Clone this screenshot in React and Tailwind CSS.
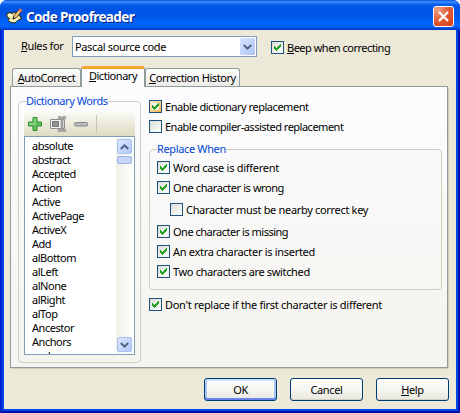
import React from 'react';

const words = ['absolute', 'abstract', 'Accepted', 'Action', 'Active', 'ActivePage', 'ActiveX', 'Add', 'alBottom', 'alLeft', 'alNone', 'alRight', 'alTop', 'Ancestor', 'Anchors', 'and'];

function Key({ children }) {
  return <span className="inline-block h-[13px] border-b border-black leading-[14px]">{children}</span>;
}

function Chevron({ up, className }) {
  return (
    <svg className={className} width="9" height="6" viewBox="0 0 9 6">
      <path d={up ? 'M0.8 5 L4.5 1.4 L8.2 5' : 'M0.8 1 L4.5 4.6 L8.2 1'} fill="none" stroke="#4d6185" strokeWidth="2" />
    </svg>
  );
}

function Check({ checked, hot, className = '', tracking = '', label }) {
  return (
    <div className={`flex h-[13px] items-center ${className}`}>
      <span className={`flex h-[13px] w-[13px] shrink-0 items-center justify-center border border-[#1c5180] bg-linear-to-br ${hot ? 'from-[#fff0cf] to-[#f8b636]' : 'from-[#dcdcd7] to-white'}`}>
        <span className={`flex h-[7px] w-[7px] items-center justify-center ${hot ? 'bg-[#f4f4ef]' : ''}`}>
          {checked && (
            <svg width="7" height="7" viewBox="0 0 7 7" shapeRendering="crispEdges">
              <path d="M0 2h1v1h1v1h1v-1h1v-1h1v-1h1v-1h1v3h-1v1h-1v1h-1v1h-1v1h-1v-1h-1v-1h-1z" fill="#21a121" />
            </svg>
          )}
        </span>
      </span>
      <span className={`ml-[3px] whitespace-nowrap leading-[14px] ${tracking}`}>{label}</span>
    </div>
  );
}

function Group({ title, legend, className, children }) {
  return (
    <fieldset className={`min-w-0 rounded-[4px] border border-[#d0d0bf] ${className}`}>
      <legend className={`h-[14px] whitespace-nowrap leading-[14px] text-[#0046d5] ${legend}`}>{title}</legend>
      {children}
    </fieldset>
  );
}

function Button({ primary, children }) {
  return (
    <button className={`flex h-[23px] w-[73px] items-center justify-center rounded-[3px] border border-[#003c74] bg-linear-to-b from-white via-[#f5f5f1] to-[#e8e7df] leading-[14px] tracking-[-0.35px] ${primary ? 'shadow-[inset_0_2px_0_#cee0fb,inset_0_-2px_0_#6982ee,inset_2px_0_0_#a9c3f2,inset_-2px_0_0_#a9c3f2]' : 'shadow-[inset_0_-1px_0_#d6d0c5]'}`}>
      <span>{children}</span>
    </button>
  );
}

function ScrollButton({ up }) {
  return (
    <span className="flex h-[15px] w-[15px] shrink-0 items-center justify-center rounded-[2px] border border-[#a9bff0] bg-linear-to-br from-[#dce7ff] to-[#b2c8fa]">
      <Chevron up={up} />
    </span>
  );
}

export default function App() {
  return (
    <div className="h-[413px] w-[460px] bg-white">
      <div className="flex h-full w-full flex-col overflow-hidden rounded-t-[7px] bg-[#0831d9] font-['Noto_Sans','Open_Sans',sans-serif] text-[11px] text-black">
        <header className="flex h-[30px] shrink-0 items-center bg-[linear-gradient(180deg,#0a50d8_0,#3c91ff_2px,#0b60ec_4px,#0054e3_8px,#0055e8_16px,#0066ff_24px,#0062f8_27px,#003dd0_29px,#0038c0_30px)] pl-[6px] pr-[6px] pt-[2px]">
          <svg width="17" height="16" viewBox="0 0 17 16">
            <path d="M1 5.500L4 4.500 6 5.500 9 4 14 8 15.500 11 11.500 12 9 15 5 14.500 2 12.500 3.500 10.500 1 9Z" fill="#efe79a" stroke="#2b2810" />
            <path d="M2.500 7L6 8M4.500 12.500L9 13 12.500 10.500" fill="none" stroke="#fffde0" strokeWidth="1.500" />
            <path d="M7 11L8 7.500 12.500 2 15 4 10.500 9.500Z" fill="#efc27a" stroke="#3a2412" strokeWidth=".8" />
            <path d="M12.200 2.200L14 .3 16.500 2.300 14.800 4.400Z" fill="#d9705a" />
            <path d="M6.500 11.500L7.500 9 9 10.200Z" fill="#111" />
          </svg>
          <h1 className="ml-[3px] mt-px text-[13.5px] font-bold leading-[20px] tracking-[-0.62px] text-white [text-shadow:1px_1px_0_#0a1f80]">Code Proofreader</h1>
          <button className="ml-auto flex h-[21px] w-[21px] items-center justify-center rounded-[3px] border border-white bg-[radial-gradient(circle_at_20%_15%,#f0a088_0,#e3603c_45%,#d03a10_100%)]">
            <svg width="11" height="11" viewBox="0 0 11 11"><path d="M1 1L10 10M10 1L1 10" stroke="white" strokeWidth="2.2" /></svg>
          </button>
        </header>

        <div className="h-[383px] w-full border-x-2 border-b-2 border-b-[#0010a8] border-l-[#0020d0] border-r-[#0010a8]">
          <main className="h-full w-full border-x-2 border-b-2 border-[#0046ea] bg-[#ece9d8]">
            <div className="flex h-[36px] pt-[6px]">
              <div className="ml-[17px] w-[51px] pt-[3px] leading-[14px] tracking-[-0.38px] whitespace-nowrap"><Key>R</Key>ules for</div>
              <div className="flex h-[21px] w-[185px] items-center border border-[#7f9db9] bg-white pl-[2px] pr-[1px]">
                <span className="leading-[14px] tracking-[-0.36px]">Pascal source code</span>
                <span className="ml-auto flex h-[17px] w-[15px] items-center justify-center rounded-[1px] bg-linear-to-br from-[#dae5ff] to-[#aec5f7]"><Chevron /></span>
              </div>
              <Check checked className="ml-[14px] mt-[5px]" tracking="tracking-[-0.5px]" label={<><Key>B</Key>eep when correcting</>} />
            </div>

            <div className="flex h-[20px] items-end whitespace-nowrap pl-[8px] leading-[14px]">
              <div className="flex h-[18px] w-[69px] justify-center rounded-t-[3px] border border-b-0 border-[#919b9c] bg-linear-to-b from-white to-[#ecebe6] pt-[2px] tracking-[-0.45px]"><span><Key>A</Key>utoCorrect</span></div>
              <div className="relative z-10 -mb-px flex h-[21px] w-[64px] justify-center rounded-t-[3px] border-x border-t-[3px] border-x-[#919b9c] border-t-[#f5a631] bg-[#fcfcfe] tracking-[-0.45px]"><span><Key>D</Key>ictionary</span></div>
              <div className="flex h-[18px] w-[95px] justify-center rounded-t-[3px] border border-b-0 border-[#919b9c] bg-linear-to-b from-white to-[#ecebe6] pt-[2px] tracking-[-0.42px]"><span><Key>C</Key>orrection History</span></div>
            </div>

            <section className="ml-[6px] flex h-[282px] w-[438px] border border-[#919b9c] bg-linear-to-b from-[#fcfcfe] to-[#f4f3ee] shadow-[1px_1px_0_#d0cebf]">
              <Group title="Dictionary Words" legend="ml-[2px] tracking-[-0.44px]" className="ml-[7px] mt-[7px] h-[269px] w-[123px] pl-[5px]">
                <div className="mt-[4px] flex h-[24px] w-[111px] items-center bg-linear-to-b from-[#fafaf6] to-[#dedbc1] pl-[4px]">
                  <svg width="14" height="14" viewBox="0 0 14 14"><path d="M5 .5h4v4.500h4.500v4H9v4.500H5V9H.5V5H5z" fill="#65bd60" stroke="#25932a" /><path d="M7 1v6M1 7h6" stroke="#b5e0ae" /></svg>
                  <svg className="ml-[8px]" width="17" height="16" viewBox="0 0 17 16">
                    <path d="M.5 3.500h14v9H.5z" fill="#f2f2f2" stroke="#909090" />
                    <path d="M2.500 5.500h6v5h-6z" fill="#929292" stroke="#777" />
                    <path d="M8 1.500h2.500l1.500 1 1.500-1H16M8 14.500h2.500l1.500-1 1.500 1H16M12 2v12" fill="none" stroke="#858585" strokeWidth="2.600" />
                    <path d="M8.500 1.500h2l1.500 1 1.500-1h2M8.500 14.500h2l1.500-1 1.500 1h2M12 2.500v11" fill="none" stroke="#ccc" strokeWidth=".8" />
                  </svg>
                  <svg className="ml-[7px]" width="14" height="5" viewBox="0 0 14 5"><rect x=".5" y=".5" width="13" height="3.500" rx="1" fill="#bbb" stroke="#888" /></svg>
                  <span className="ml-[8px] h-[19px] w-px bg-[#c9c6b0]" />
                </div>
                <div className="flex h-[219px] w-[111px] border border-[#7f9db9] bg-white pl-px pr-px pt-px">
                  <ul className="h-[216px] flex-1 overflow-hidden pl-[6px] pt-px tracking-[-0.46px]">
                    {words.map((w) => <li key={w} className="h-[14px] leading-[14px]">{w}</li>)}
                  </ul>
                  <div className="flex h-[215px] w-[17px] flex-col items-center bg-linear-to-r from-[#f0f0ea] to-[#fefefb] py-px">
                    <ScrollButton up />
                    <span className="mt-[2px] h-[8px] w-[15px] rounded-[2px] border border-[#98b1e4] bg-[#c8d6fb]" />
                    <span className="mt-auto"><ScrollButton /></span>
                  </div>
                </div>
              </Group>

              <div className="ml-[8px] flex flex-col pt-[13px]">
                <Check checked hot tracking="tracking-[-0.47px]" label="Enable dictionary replacement" />
                <Check className="mt-[7px]" tracking="tracking-[-0.5px]" label="Enable compiler-assisted replacement" />
                <Group title="Replace When" legend="tracking-[-0.36px]" className="mt-[9px] h-[148px] w-[293px] pl-[7px]">
                  <Check checked className="mt-[5px]" tracking="tracking-[-0.28px]" label="Word case is different" />
                  <Check checked className="mt-[7px]" tracking="tracking-[-0.42px]" label="One character is wrong" />
                  <Check className="ml-[13px] mt-[9px]" tracking="tracking-[-0.32px]" label="Character must be nearby correct key" />
                  <Check checked className="mt-[9px]" tracking="tracking-[-0.5px]" label="One character is missing" />
                  <Check checked className="mt-[7px]" tracking="tracking-[-0.3px]" label="An extra character is inserted" />
                  <Check checked className="mt-[7px]" tracking="tracking-[-0.35px]" label="Two characters are switched" />
                </Group>
                <Check checked className="mt-[8px]" tracking="tracking-[-0.29px]" label="Don't replace if the first character is different" />
              </div>
            </section>

            <footer className="ml-[200px] mt-[10px] flex gap-[13px]">
              <Button primary>OK</Button>
              <Button>Cancel</Button>
              <Button><Key>H</Key>elp</Button>
            </footer>
          </main>
        </div>
      </div>
    </div>
  );
}
